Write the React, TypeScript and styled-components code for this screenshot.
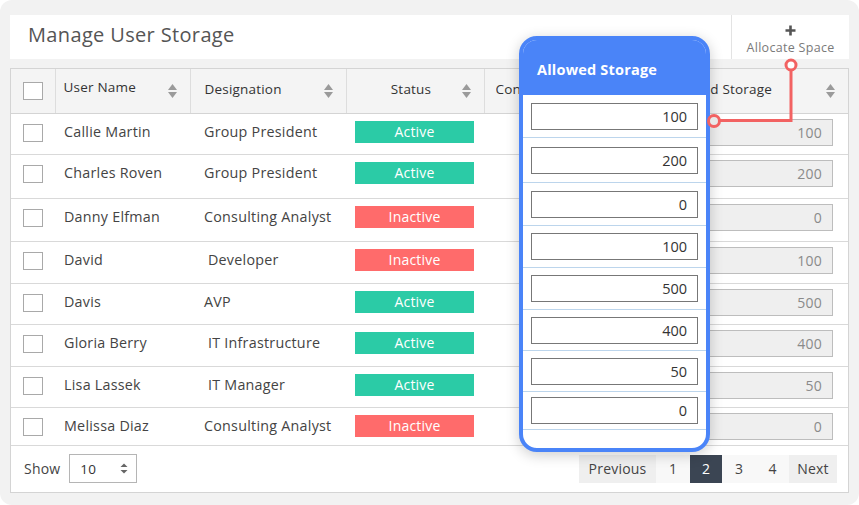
import React from 'react';
import styled, { createGlobalStyle } from 'styled-components';

const GlobalStyle = createGlobalStyle`
  html, body { margin: 0; padding: 0; background: #ffffff; }
  body { font-family: "Open Sans", "Noto Sans", sans-serif; }
  * { box-sizing: border-box; }
`;

const FONT = `"Open Sans", "Noto Sans", sans-serif`;

type User = {
  name: string;
  designation: string;
  active: boolean;
  allowed: number;
  h: number;
  ph: number;
};

const users: User[] = [
  { name: 'Callie Martin', designation: 'Group President', active: true, allowed: 100, h: 41, ph: 43 },
  { name: 'Charles Roven', designation: 'Group President', active: true, allowed: 200, h: 44, ph: 45 },
  { name: 'Danny Elfman', designation: 'Consulting Analyst', active: false, allowed: 0, h: 43, ph: 43 },
  { name: 'David', designation: ' Developer', active: false, allowed: 100, h: 42, ph: 42 },
  { name: 'Davis', designation: 'AVP', active: true, allowed: 500, h: 41, ph: 42 },
  { name: 'Gloria Berry', designation: ' IT Infrastructure', active: true, allowed: 400, h: 42, ph: 41 },
  { name: 'Lisa Lassek', designation: ' IT Manager', active: true, allowed: 50, h: 41, ph: 41 },
  { name: 'Melissa Diaz', designation: 'Consulting Analyst', active: false, allowed: 0, h: 38, ph: 38 },
];

const Frame = styled.div`
  position: relative;
  width: 859px;
  height: 505px;
  background: #f2f2f2;
  border-radius: 12px;
  padding: 15px 10px 12px 10px;
  display: flex;
  flex-direction: column;
  gap: 9px;
  font-family: ${FONT};
`;

const TitleBar = styled.div`
  display: flex;
  height: 44px;
  background: #ffffff;
  flex-shrink: 0;
`;

const Title = styled.h1`
  flex: 1;
  margin: 0;
  padding: 0 0 5px 18px;
  display: flex;
  align-items: center;
  font-size: 20px;
  font-weight: 400;
  color: #555555;
  letter-spacing: 0.35px;
`;

const AllocateButton = styled.button`
  width: 118px;
  border: none;
  border-left: 1px solid #e3e3e3;
  background: #ffffff;
  display: flex;
  flex-direction: column;
  align-items: center;
  justify-content: center;
  gap: 3px;
  font-family: ${FONT};
  font-size: 12.5px;
  letter-spacing: 0.3px;
  color: #7a7a7a;
  padding: 6px 0 0 0;
  cursor: pointer;
`;

const TableCard = styled.div`
  flex: 1;
  background: #ffffff;
  border: 1px solid #d4d4d4;
  display: flex;
  flex-direction: column;
`;

const Table = styled.table`
  width: 100%;
  border-collapse: collapse;
  table-layout: fixed;
`;

const HeadCell = styled.th<{ $pl?: number }>`
  height: 44px;
  background: #f4f4f4;
  border-right: 1px solid #dddddd;
  border-bottom: 1px solid #d4d4d4;
  padding: 0 13px 3px ${(p) => p.$pl ?? 10}px;
  font-size: 13.5px;
  font-weight: 500;
  letter-spacing: 0.2px;
  color: #333333;
  text-align: left;
  &:last-child { border-right: none; }
`;

const HeadInner = styled.div<{ $center?: boolean }>`
  display: flex;
  align-items: center;
  justify-content: space-between;
  span { flex: 1; text-align: ${(p) => (p.$center ? 'center' : 'left')}; white-space: nowrap; overflow: hidden; }
  svg { margin-top: 3px; }
`;

const Row = styled.tr<{ $h: number }>`
  height: ${(p) => p.$h}px;
  border-bottom: 1px solid #d9d9d9;
`;

const Cell = styled.td<{ $pl?: number; $pr?: number }>`
  vertical-align: top;
  padding: 5px ${(p) => p.$pr ?? 0}px 0 ${(p) => p.$pl ?? 9}px;
  font-size: 14.3px;
  letter-spacing: 0.25px;
  line-height: 26px;
  color: #444444;
  white-space: pre;
  overflow: hidden;
`;

const Checkbox = styled.span<{ $mt?: number }>`
  display: block;
  width: 20px;
  height: 18px;
  border: 1px solid #a9a9a9;
  background: #ffffff;
  margin-top: ${(p) => p.$mt ?? 5}px;
`;

const Badge = styled.span<{ $active: boolean }>`
  display: block;
  width: 119px;
  height: 22px;
  margin-top: 2px;
  line-height: 22px;
  text-align: center;
  font-size: 14px;
  letter-spacing: 0.2px;
  color: #ffffff;
  background: ${(p) => (p.$active ? '#2bcba6' : '#ff6b6b')};
`;

const GrayInput = styled.div`
  height: 27px;
  border: 1px solid #bdbdbd;
  background: #efefef;
  color: #8a8a8a;
  font-size: 14px;
  line-height: 25px;
  text-align: right;
  padding-right: 10px;
`;

const Footer = styled.div`
  flex: 1;
  display: flex;
  align-items: center;
  justify-content: space-between;
  padding: 0 11px 0 13px;
`;

const ShowGroup = styled.label`
  display: flex;
  align-items: center;
  gap: 9px;
  font-size: 14px;
  letter-spacing: 0.2px;
  color: #444444;
`;

const SelectBox = styled.div`
  width: 68px;
  height: 29px;
  border: 1px solid #b5b5b5;
  display: flex;
  align-items: center;
  justify-content: space-between;
  padding: 0 8px 0 10px;
  font-size: 13.5px;
  color: #333333;
`;

const Pager = styled.div`
  display: flex;
  height: 28px;
`;

const PageButton = styled.button<{ $w: number; $active?: boolean; $edge?: boolean }>`
  width: ${(p) => p.$w}px;
  height: 28px;
  border: none;
  padding: 0;
  font-family: ${FONT};
  font-size: 14px;
  letter-spacing: 0.2px;
  color: ${(p) => (p.$active ? '#ffffff' : '#444444')};
  background: ${(p) => (p.$active ? '#3b4553' : p.$edge ? '#efefef' : '#f8f8f8')};
  cursor: pointer;
`;

const Popup = styled.div`
  position: absolute;
  left: 519px;
  top: 36px;
  width: 191px;
  height: 416px;
  border: 4px solid #4a84f8;
  border-radius: 18px;
  background: #ffffff;
  overflow: hidden;
  box-shadow: 0 3px 14px rgba(0, 0, 0, 0.2);
  display: flex;
  flex-direction: column;
`;

const PopupHeader = styled.div`
  height: 55px;
  background: #4a84f8;
  color: #ffffff;
  font-size: 14.5px;
  font-weight: 700;
  letter-spacing: 0.2px;
  display: flex;
  align-items: center;
  padding: 4px 0 0 14px;
  flex-shrink: 0;
`;

const PopupRow = styled.div<{ $h: number }>`
  height: ${(p) => p.$h}px;
  border-bottom: 1px solid #bcd5ec;
  display: flex;
  align-items: center;
  padding: 0 8px;
  flex-shrink: 0;
`;

const EditInput = styled.input`
  width: 100%;
  height: 27px;
  border: 1px solid #777777;
  background: #ffffff;
  text-align: right;
  padding: 0 10px 0 0;
  font-family: ${FONT};
  font-size: 14.5px;
  font-weight: 500;
  color: #333333;
  outline: none;
`;

const Connector = styled.svg`
  position: absolute;
  left: 0;
  top: 0;
  pointer-events: none;
`;

const SortIcon = () => (
  <svg width="9" height="14" viewBox="0 0 9 14" style={{ flexShrink: 0 }}>
    <path d="M4.5 0 L9 6 L0 6 Z" fill="#9a9a9a" />
    <path d="M0 8 L9 8 L4.5 14 Z" fill="#9a9a9a" />
  </svg>
);

const SelectChevron = () => (
  <svg width="8" height="11" viewBox="0 0 8 11">
    <path d="M4 0.5 L7.5 4 L0.5 4 Z" fill="#666" />
    <path d="M0.5 7 L7.5 7 L4 10.5 Z" fill="#666" />
  </svg>
);

const PlusIcon = () => (
  <svg width="11" height="11" viewBox="0 0 11 11">
    <path d="M5.5 0.5 V10.5 M0.5 5.5 H10.5" stroke="#555" strokeWidth="2.6" />
  </svg>
);

export default function App() {
  return (
    <>
      <GlobalStyle />
      <Frame>
        <TitleBar>
          <Title>Manage User Storage</Title>
          <AllocateButton>
            <PlusIcon />
            Allocate Space
          </AllocateButton>
        </TitleBar>
        <TableCard>
          <Table>
            <colgroup>
              <col style={{ width: 44 }} />
              <col style={{ width: 135 }} />
              <col style={{ width: 156 }} />
              <col style={{ width: 138 }} />
              <col style={{ width: 172 }} />
              <col />
            </colgroup>
            <thead>
              <tr>
                <HeadCell $pl={12}>
                  <Checkbox $mt={3} />
                </HeadCell>
                <HeadCell $pl={8}>
                  <HeadInner>
                    <span style={{ marginTop: -4 }}>User Name</span>
                    <SortIcon />
                  </HeadInner>
                </HeadCell>
                <HeadCell $pl={14}>
                  <HeadInner>
                    <span>Designation</span>
                    <SortIcon />
                  </HeadInner>
                </HeadCell>
                <HeadCell $pl={14}>
                  <HeadInner $center>
                    <span>Status</span>
                    <SortIcon />
                  </HeadInner>
                </HeadCell>
                <HeadCell $pl={11}>
                  <HeadInner>
                    <span>Consumed Storage</span>
                    <SortIcon />
                  </HeadInner>
                </HeadCell>
                <HeadCell $pl={11}>
                  <HeadInner>
                    <span>Allowed Storage</span>
                    <SortIcon />
                  </HeadInner>
                </HeadCell>
              </tr>
            </thead>
            <tbody>
              {users.map((u) => (
                <Row key={u.name} $h={u.h}>
                  <Cell $pl={12}>
                    <Checkbox />
                  </Cell>
                  <Cell $pl={9}>{u.name}</Cell>
                  <Cell $pl={14}>{u.designation}</Cell>
                  <Cell $pl={9}>
                    <Badge $active={u.active}>{u.active ? 'Active' : 'Inactive'}</Badge>
                  </Cell>
                  <Cell $pl={40}>{''}</Cell>
                  <Cell $pl={14} $pr={15}>
                    <GrayInput>{u.allowed}</GrayInput>
                  </Cell>
                </Row>
              ))}
            </tbody>
          </Table>
          <Footer>
            <ShowGroup>
              Show
              <SelectBox>
                10
                <SelectChevron />
              </SelectBox>
            </ShowGroup>
            <Pager>
              <PageButton $w={77} $edge>Previous</PageButton>
              <PageButton $w={34}>1</PageButton>
              <PageButton $w={32} $active>2</PageButton>
              <PageButton $w={34}>3</PageButton>
              <PageButton $w={33}>4</PageButton>
              <PageButton $w={48} $edge>Next</PageButton>
            </Pager>
          </Footer>
        </TableCard>

        <Popup>
          <PopupHeader>Allowed Storage</PopupHeader>
          {users.map((u) => (
            <PopupRow key={u.name} $h={u.ph}>
              <EditInput defaultValue={String(u.allowed)} />
            </PopupRow>
          ))}
        </Popup>

        <Connector width="859" height="505" viewBox="0 0 859 505">
          <path d="M791 70 V120.5 H719" fill="none" stroke="#f26262" strokeWidth="3" />
          <circle cx="791" cy="65" r="5" fill="#ffffff" stroke="#f26262" strokeWidth="3" />
          <circle cx="714" cy="121" r="5.5" fill="#e8e8e8" stroke="#f26262" strokeWidth="3" />
        </Connector>
      </Frame>
    </>
  );
}
